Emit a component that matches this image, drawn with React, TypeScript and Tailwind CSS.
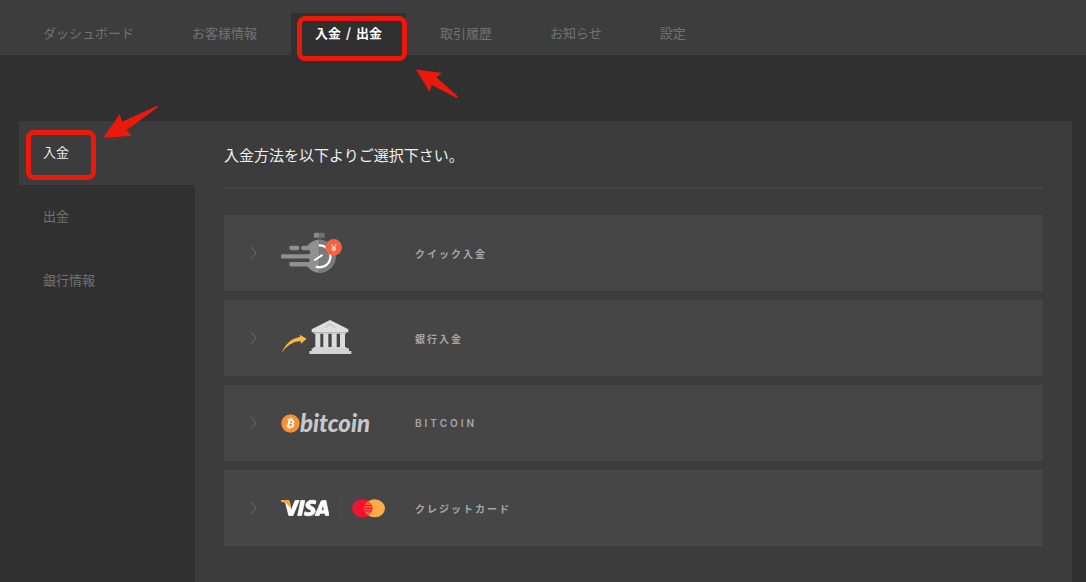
import type { ReactNode } from 'react';
import { FaBitcoin } from 'react-icons/fa';
import { SiVisa } from 'react-icons/si';

const tabs = ['ダッシュボード', 'お客様情報', '入金 / 出金', '取引履歴', 'お知らせ', '設定'];
const activeTab = 2;

const sideItems = ['入金', '出金', '銀行情報'];

function QuickIcon() {
    return (
        <svg width="63" height="42" viewBox="197 80 190 126" aria-hidden="true">
            <rect x="296" y="82" width="17" height="15" rx="3" fill="#8a8a8a" />
            <rect x="311" y="82" width="18" height="15" rx="3" fill="#707070" />
            <path d="M306 97h14v8h-14z" fill="#555555" />
            <path d="M313 103a50 50 0 0 0-34 14v17a6 6 0 0 1 0 13v12a6 6 0 0 1-3 12v12a50 50 0 0 0 37 20z" fill="#909090" />
            <path d="M313 103a50 50 0 0 1 0 100z" fill="#7b7b7b" />
            <g stroke="#909090" strokeWidth="13" strokeLinecap="round">
                <path d="M228 128h18M264 128h24M202 153h84M228 177h60" />
            </g>
            <path d="M311 120a33 33 0 1 1-9 64" fill="none" stroke="#fff" strokeWidth="7" />
            <path d="M299 164l21-14" stroke="#fff" strokeWidth="6" strokeLinecap="round" />
            <circle cx="356" cy="126" r="25" fill="#f5623f" />
            <path d="M348 116l8 11 8-11M356 127v12M349 128h14M349 133h14" fill="none" stroke="#fff" strokeWidth="2.500" />
        </svg>
    );
}

function BankIcon() {
    return (
        <svg width="71" height="36" viewBox="200 72 213 108" aria-hidden="true">
            <path d="M202 171c10-26 29-44 55-48l-1-7 21 12-17 15-1-8c-25 2-42 14-57 36z" fill="#fdb740" />
            <path d="M347 72l55 28v9H292v-9z" fill="#dedede" />
            <path d="M347 81l19 14h-38z" fill="#c9c9c9" />
            <path d="M347 88l10 7h-20z" fill="#e6e6e6" />
            <path d="M298 109h98v4h-98zM298 153h98v6h-98z" fill="#d2d2d2" />
            <g fill="#dcdcdc">
                <rect x="303" y="112" width="15" height="42" />
                <rect x="327" y="112" width="15" height="42" />
                <rect x="352" y="112" width="15" height="42" />
                <rect x="377" y="112" width="15" height="42" />
            </g>
            <path d="M292 157h112v8h7v9H285v-9h7z" fill="#d4d4d4" />
        </svg>
    );
}

function BitcoinLogo() {
    return (
        <span className="flex items-center">
            <FaBitcoin className="size-[19px] rounded-full bg-[radial-gradient(white_50%,transparent_60%)] text-[#f98f30]" />
            <span className="font-[Lato,sans-serif] text-2xl leading-6 font-black text-[#c8c8c8] italic">bitcoin</span>
        </span>
    );
}

function CardLogos() {
    return (
        <span className="flex items-center">
            <span className="relative">
                <SiVisa className="size-12 stroke-white text-white" strokeWidth="0.4" />
                <svg className="absolute inset-0 size-12" viewBox="0 0 24 24" aria-hidden="true">
                    <path d="M0 8h3.400c.6 0 .9.4 1 .9l.6 3.200-2.400-2.500C1.700 8.900.8 8.600 0 8.500z" fill="#f7a030" />
                </svg>
            </span>
            <span className="mx-[11px] h-5 w-px bg-[#505050]" />
            <svg width="33" height="19" viewBox="0 0 99 57" aria-hidden="true">
                <ellipse cx="31" cy="28" rx="31" ry="27" fill="#f1132f" />
                <ellipse cx="68" cy="28" rx="31" ry="27" fill="#ffab4a" />
                <path d="M49 6a31 27 0 0 1 0 44a31 27 0 0 1 0-44z" fill="#f55a35" />
                <path d="M38 20h22M37 28h25M38 36h22" stroke="#f1132f" strokeWidth="3" />
            </svg>
        </span>
    );
}

const methods: { label: string; logo: ReactNode }[] = [
    { label: 'クイック入金', logo: <QuickIcon /> },
    { label: '銀行入金', logo: <BankIcon /> },
    { label: 'BITCOIN', logo: <BitcoinLogo /> },
    { label: 'クレジットカード', logo: <CardLogos /> },
];

export default function App() {
    return (
        <div className="relative flex min-h-screen flex-col bg-[#303030] font-['Noto_Sans_CJK_JP',sans-serif] text-[13px] text-[#727272]">
            {/* Top tabs */}
            <header className="bg-[#3d3d3d] pt-[13px] pl-[19px]">
                <nav className="flex gap-[10px]">
                    {tabs.map((tab, i) => (
                        <a
                            key={tab}
                            href="#"
                            className={
                                i === activeTab
                                    ? 'flex h-[42px] items-center gap-[5px] bg-[#303030] px-6 pb-0.5 font-bold text-white'
                                    : 'flex h-[42px] items-center px-6 pb-0.5'
                            }
                        >
                            {tab.split(' ').map((part) => (
                                <span key={part}>{part}</span>
                            ))}
                        </a>
                    ))}
                </nav>
            </header>

            <div className="mt-[66px] mr-[14px] ml-[19px] flex flex-1">
                {/* Side menu */}
                <nav className="w-44 shrink-0">
                    {sideItems.map((item, i) => (
                        <a
                            key={item}
                            href="#"
                            className={
                                i === 0
                                    ? 'flex h-16 items-center bg-[#3c3c3c] px-6 pb-0.5 text-[#ededed]'
                                    : 'flex h-16 items-center px-6 pb-0.5'
                            }
                        >
                            {item}
                        </a>
                    ))}
                </nav>

                {/* Deposit methods */}
                <main className="flex-1 bg-[#3c3c3c] px-[29px] pb-9">
                    <h1 className="flex h-[68px] items-center border-b-2 border-[#444444] pt-0.5 text-[15px] text-[#f0f0f0]">
                        入金方法を以下よりご選択下さい。
                    </h1>
                    <div className="mt-[26px] flex flex-col gap-[9px]">
                        {methods.map(({ label, logo }) => (
                            <button
                                key={label}
                                type="button"
                                className="flex h-[76px] items-center bg-[#464646] pl-[26px] text-left"
                            >
                                <svg className="mr-6 shrink-0" width="7" height="14" viewBox="0 0 7 14" fill="none" stroke="#6a6a6a" aria-hidden="true">
                                    <path d="M1 1l5 6-5 6" />
                                </svg>
                                <span className="w-[134px] shrink-0">{logo}</span>
                                <span
                                    className={
                                        label === 'BITCOIN'
                                            ? 'font-[Inter,sans-serif] text-[10px] font-semibold tracking-[3px] text-[#a6a6a6]'
                                            : 'text-[10px] font-bold tracking-[2px] text-[#a6a6a6]'
                                    }
                                >
                                    {label}
                                </span>
                            </button>
                        ))}
                    </div>
                </main>
            </div>

            {/* Callouts */}
            <div className="pointer-events-none absolute top-4 left-[297px] h-[45px] w-[110px] rounded-lg border-5 border-[#e9190c]" />
            <svg className="pointer-events-none absolute top-[68px] left-[415px]" width="45" height="32" viewBox="415 68 45 32" fill="#e9190c" aria-hidden="true">
                <path d="M416 69.500l26.300 3.500-6 4.300L458 96.500 456.700 98l-25-13-2 7z" />
            </svg>
            <div className="pointer-events-none absolute top-[130px] left-[26px] h-[50px] w-[70px] rounded-lg border-5 border-[#e9190c]" />
            <svg className="pointer-events-none absolute top-[104px] left-[102px]" width="58" height="36" viewBox="102 104 58 36" fill="#e9190c" aria-hidden="true">
                <path d="M103 138l16.700-23.700 2.300 7.400 35.300-16 .7 1.600-31.700 23 5.700 5.400z" />
            </svg>
        </div>
    );
}
